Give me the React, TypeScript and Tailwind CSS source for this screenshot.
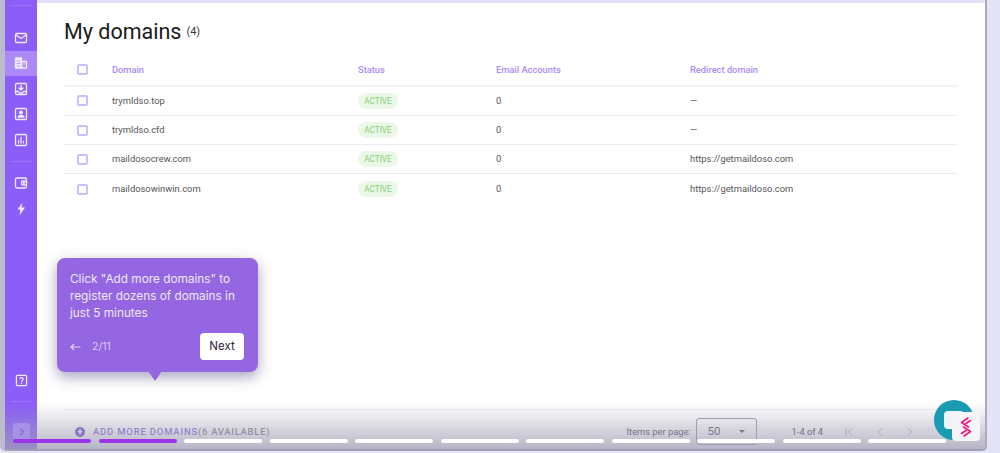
import { ChevronFirst, ChevronLeft, ChevronRight } from "lucide-react";

const rows = [
  { domain: "trymldso.top", redirect: "—" },
  { domain: "trymldso.cfd", redirect: "—" },
  { domain: "maildosocrew.com", redirect: "https://getmaildoso.com" },
  { domain: "maildosowinwin.com", redirect: "https://getmaildoso.com" },
];

const steps = [0, 1, 2, 3, 4, 5, 6, 7, 8, 9, 10];
const gridCols = "grid grid-cols-[48px_246px_138px_194px_1fr] items-center";

const Icon = ({ children }: { children: React.ReactNode }) => (
  <svg
    width="14"
    height="14"
    viewBox="0 0 14 14"
    fill="none"
    stroke="#f1ebff"
    strokeWidth="1.3"
    strokeLinejoin="round"
    strokeLinecap="round"
  >
    {children}
  </svg>
);

const MailIcon = () => (
  <Icon>
    <rect x="1.5" y="2.5" width="11" height="9" rx="1.2" />
    <path d="M2 4l5 3.5L12 4" />
  </Icon>
);
const DomainsIcon = () => (
  <Icon>
    <path d="M1.5 2h6v10h-6z" fill="#f1ebff" />
    <path d="M7.5 5.5h5V12h-5z" />
    <path d="M3 5h3M3 7.5h3M3 10h3" stroke="#ab8af7" strokeWidth="0.8" />
    <path d="M9.5 8h1.5" strokeWidth="1" />
  </Icon>
);
const InboxIcon = () => (
  <Icon>
    <rect x="1.5" y="1.5" width="11" height="11" rx="1.2" />
    <path d="M7 3.5v4M5 6l2 2 2-2" strokeWidth="1.5" />
    <path d="M1.5 9.5h3l1 1.5h3l1-1.5h3" />
  </Icon>
);
const ContactIcon = () => (
  <Icon>
    <rect x="1.5" y="1.5" width="11" height="11" rx="1.2" />
    <circle cx="7" cy="5.5" r="1.4" fill="#f1ebff" />
    <path d="M4 10c.5-2 5.500-2 6 0z" fill="#f1ebff" />
  </Icon>
);
const ChartIcon = () => (
  <Icon>
    <rect x="1.5" y="1.5" width="11" height="11" rx="1.2" />
    <path d="M4.500 10V7.500M7 10V4.500M9.500 10V8.500" />
  </Icon>
);
const WalletIcon = () => (
  <Icon>
    <rect x="1.5" y="2" width="11" height="10" rx="1.5" />
    <rect x="7.500" y="5" width="5" height="4" rx="1" />
    <circle cx="9.800" cy="7" r="0.5" />
  </Icon>
);
const BoltIcon = () => (
  <svg width="12" height="14" viewBox="0 0 12 14" fill="#f1ebff">
    <path d="M7.500 0.500 2.500 7.500h3l-1 6 5.500-8H6.500z" />
  </svg>
);
const HelpIcon = () => (
  <svg width="13" height="13" viewBox="0 0 14 14" fill="none" stroke="#f1ebff" strokeWidth="1.3">
    <rect x="1.5" y="1.5" width="11" height="11" rx="1.2" />
    <path d="M5.200 5.500C5.200 3.500 8.800 3.500 8.800 5.500 8.800 7 7 6.800 7 8.500M7 9.500v1.200" />
  </svg>
);

const SideItem = ({ children, active }: { children: React.ReactNode; active?: boolean }) => (
  <div className={`flex h-[25.5px] w-full items-center justify-center ${active ? "bg-[#ab8af7]" : ""}`}>
    {children}
  </div>
);

const Checkbox = () => (
  <div className="ml-[13px] h-[11px] w-[11px] rounded-[2px] border-2 border-[#cdbcff]" />
);

const Sidebar = () => (
  <aside className="flex h-full w-[32px] shrink-0 flex-col items-center bg-[#8b5ef7]">
    <div className="mt-[5px] h-px w-[22px] bg-[#9a75f3]" />
    <div className="mt-[19px] flex w-full flex-col items-center">
      <SideItem><MailIcon /></SideItem>
      <SideItem active><DomainsIcon /></SideItem>
      <SideItem><InboxIcon /></SideItem>
      <SideItem><ContactIcon /></SideItem>
      <SideItem><ChartIcon /></SideItem>
    </div>
    <div className="mt-[8px] h-px w-[22px] bg-[#9a75f3]" />
    <div className="mt-[9px] flex w-full flex-col items-center">
      <SideItem><WalletIcon /></SideItem>
      <SideItem><BoltIcon /></SideItem>
    </div>
    <div className="mt-auto flex h-[13px] items-center">
      <HelpIcon />
    </div>
    <div className="mt-[14px] h-px w-[22px] bg-[#9a75f3]" />
    <div className="mb-[9px] mt-[21px] h-[17px] w-[17px]" />
  </aside>
);

const DomainTable = () => (
  <div className="font-['Roboto',sans-serif]">
    <div className={`${gridCols} h-[31.6px] border-b-2 border-[#f3f3f4] text-[9.3px] font-medium text-[#a98bfb]`}>
      <Checkbox />
      <span>Domain</span>
      <span>Status</span>
      <span>Email Accounts</span>
      <span>Redirect domain</span>
    </div>
    {rows.map((row) => (
      <div key={row.domain} className={`${gridCols} h-[29.3px] border-b border-[#ececee] text-[9.4px] text-[#555555] last:border-b-0`}>
        <Checkbox />
        <span>{row.domain}</span>
        <span>
          <span className="inline-flex h-[16px] w-[40px] items-center justify-center rounded-full bg-[#ebf7e7] text-[8.2px] text-[#86d173]">
            ACTIVE
          </span>
        </span>
        <span>0</span>
        <span>{row.redirect}</span>
      </div>
    ))}
  </div>
);

const Footer = () => (
  <div className="mr-[27px] flex h-[40px] items-center border-t border-[#ececee] pt-[4px] font-['Roboto',sans-serif]">
    <div className="ml-[11px] mt-[1px] flex h-[10px] w-[10px] items-center justify-center rounded-full bg-[#6f4fd0] text-[10px] font-bold leading-none text-white">
      +
    </div>
    <span className="ml-[8px] mt-[1px] text-[9.5px] font-medium tracking-[0.8px] text-[#8a6be0]">ADD MORE DOMAINS</span>
    <span className="mt-[1px] text-[9.5px] font-medium tracking-[0.7px] text-[#85838f]">(6 AVAILABLE)</span>
    <span className="ml-auto text-[9.3px] text-[#4b4955]">Items per page:</span>
    <div className="ml-[5px] flex h-[27px] w-[61px] items-center justify-between rounded-[3px] border border-[#9d9ba8] pl-[11px] pr-[11px] text-[11.5px] text-[#55535f]">
      <span>50</span>
      <span className="h-0 w-0 border-x-[3.5px] border-t-[3.5px] border-x-transparent border-t-[#55535f]" />
    </div>
    <span className="ml-[35px] text-[9.3px] text-[#4b4955]">1-4 of 4</span>
    <div className="ml-[19px] flex w-[75px] items-center justify-between text-[#9d9ba8]">
      <ChevronFirst size={14} strokeWidth={1.3} />
      <ChevronLeft size={14} strokeWidth={1.3} />
      <ChevronRight size={14} strokeWidth={1.3} />
    </div>
    <div className="w-[41px]" />
  </div>
);

const TourTip = () => (
  <div className="absolute left-[57px] top-[258px] h-[114px] w-[201px] rounded-[8px] bg-[#9466e2] pl-[13px] pr-[14px] pt-[13px] font-['Inter',sans-serif] shadow-[0_5px_14px_rgba(60,50,110,0.45)]">
    <p className="text-[11.8px] leading-[17px] text-[#f0e8fc]">
      Click "Add more domains" to
      <br />
      register dozens of domains in
      <br />
      just 5 minutes
    </p>
    <div className="mt-[11px] flex items-center">
      <svg width="11" height="8" viewBox="0 0 11 8" fill="none" stroke="#e3d5f8" strokeWidth="1.2">
        <path d="M10.500 4H1M4 1 1 4l3 3" />
      </svg>
      <span className="ml-[11px] text-[10.5px] text-[#d9c8f5]">2/11</span>
      <button className="ml-auto h-[27px] w-[44px] rounded-[4px] bg-white text-[11.5px] text-[#2d2340]">
        Next
      </button>
    </div>
    <div className="absolute left-[91px] top-[113px] h-[10px] w-[14px] bg-[#9466e2] [clip-path:polygon(0_0,100%_0,50%_100%)]" />
  </div>
);

const ChatWidget = () => (
  <div className="absolute left-[934px] top-[400px] h-[41px] w-[46px]">
    <div className="relative h-[40px] w-[40px] rounded-full bg-[#1a9ab3]">
      <div className="absolute left-[10px] top-[11px] h-[18px] w-[20px] rounded-[4px] bg-[#eef3f5]" />
    </div>
    <div className="absolute left-[18px] top-[12px] flex h-[29px] w-[28px] items-center justify-center rounded-[4px] bg-[#f5f4f7]">
      <svg width="14" height="20" viewBox="0 0 14 20" fill="none" stroke="#e8177f" strokeWidth="1.6" strokeLinecap="round" strokeLinejoin="round">
        <path d="M9 1 2.500 5.500 9.500 10" />
        <path d="M11.500 3.500 7 6.500" />
        <path d="M4.500 10 11.500 14.500 5 19" />
        <path d="M7 13.500 2.500 16.500" />
      </svg>
    </div>
  </div>
);

const TourProgress = () => (
  <div className="absolute left-[13px] top-[439px] flex gap-[7.5px]">
    {steps.map((step) => (
      <div key={step} className={`h-[4px] w-[78px] rounded-full ${step < 2 ? "bg-[#9a35ea]" : "bg-white"}`} />
    ))}
  </div>
);

const App = () => {
  return (
    <div className="relative h-[453px] w-[1000px] overflow-hidden bg-[#e4e4f6]">
      <div className="flex h-[451px] w-[987px] rounded-b-[5px] border-b-2 border-l-[5px] border-r-2 border-[#a9a9c0] border-l-[#bcbccd] bg-white">
        <Sidebar />
        <main className="flex min-w-0 flex-1 flex-col">
          <div className="h-[3px] bg-[#e6dffc]" />
          <div className="flex-1 pl-[27px] pr-[27px]">
            <h1 className="mt-[15px] flex h-[28px] items-center gap-[5px] font-['Roboto',sans-serif] text-[21.5px] font-normal text-[#1a1a1a]">
              My domains <span className="text-[11px] text-[#3a3a3a]">(4)</span>
            </h1>
            <div className="mt-[9px]">
              <DomainTable />
            </div>
          </div>
          <div className="pl-[27px]">
            <Footer />
          </div>
        </main>
      </div>
      <div className="pointer-events-none absolute bottom-[2px] left-[5px] h-[48px] w-[980px] rounded-b-[5px] bg-gradient-to-b from-transparent to-[#a09eb4]/80" />
      <div className="absolute left-[13px] top-[423px] flex h-[17px] w-[17px] items-center justify-center rounded-[3px] bg-[#a592e4]">
        <ChevronRight size={12} strokeWidth={2} color="#6d4bd0" />
      </div>
      <TourTip />
      <TourProgress />
      <ChatWidget />
    </div>
  );
};

export default App;
